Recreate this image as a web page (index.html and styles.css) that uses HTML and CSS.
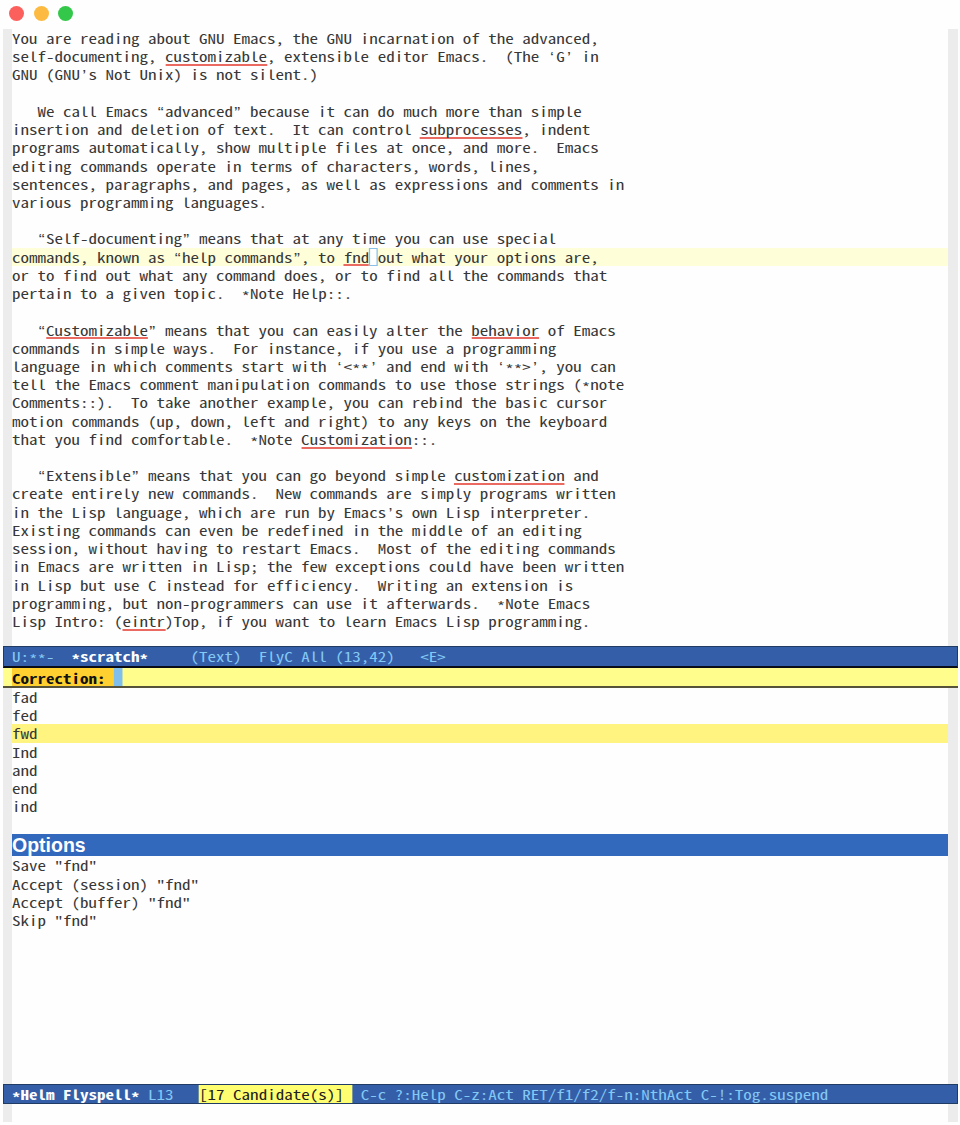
FILE: index.html
```html
<!DOCTYPE html>
<html lang="en">
<head>
<meta charset="utf-8">
<title>*scratch*</title>
<link rel="stylesheet" href="styles.css">
</head>
<body>
<div class="titlebar"><span class="dot red"></span><span class="dot amber"></span><span class="dot green"></span></div>
<main class="frame">
<section class="buffer text">
<div class="line">You are reading about GNU Emacs, the GNU incarnation of the advanced,</div>
<div class="line">self-documenting, <u>customizable</u>, extensible editor Emacs.  (The <q>‘</q>G<q>’</q> in</div>
<div class="line">GNU (GNU<q>’</q>s Not Unix) is not silent.)</div>
<div class="line"></div>
<div class="line">   We call Emacs <q>“</q>advanced<q>”</q> because it can do much more than simple</div>
<div class="line">insertion and deletion of text.  It can control <u>subprocesses</u>, indent</div>
<div class="line">programs automatically, show multiple files at once, and more.  Emacs</div>
<div class="line">editing commands operate in terms of characters, words, lines,</div>
<div class="line">sentences, paragraphs, and pages, as well as expressions and comments in</div>
<div class="line">various programming languages.</div>
<div class="line"></div>
<div class="line">   <q>“</q>Self-documenting<q>”</q> means that at any time you can use special</div>
<div class="line current">commands, known as <q>“</q>help commands<q>”</q>, to <u>fnd</u><span class="point"> </span>out what your options are,</div>
<div class="line">or to find out what any command does, or to find all the commands that</div>
<div class="line">pertain to a given topic.  <i>*</i>Note Help::.</div>
<div class="line"></div>
<div class="line">   <q>“</q><u>Customizable</u><q>”</q> means that you can easily alter the <u>behavior</u> of Emacs</div>
<div class="line">commands in simple ways.  For instance, if you use a programming</div>
<div class="line">language in which comments start with <q>‘</q>&lt;<i>**</i><q>’</q> and end with <q>‘</q><i>**</i>&gt;<q>’</q>, you can</div>
<div class="line">tell the Emacs comment manipulation commands to use those strings (<i>*</i>note</div>
<div class="line">Comments::).  To take another example, you can rebind the basic cursor</div>
<div class="line">motion commands (up, down, left and right) to any keys on the keyboard</div>
<div class="line">that you find comfortable.  <i>*</i>Note <u>Customization</u>::.</div>
<div class="line"></div>
<div class="line">   <q>“</q>Extensible<q>”</q> means that you can go beyond simple <u>customization</u> and</div>
<div class="line">create entirely new commands.  New commands are simply programs written</div>
<div class="line">in the Lisp language, which are run by Emacs<q>’</q>s own Lisp interpreter.</div>
<div class="line">Existing commands can even be redefined in the middle of an editing</div>
<div class="line">session, without having to restart Emacs.  Most of the editing commands</div>
<div class="line">in Emacs are written in Lisp; the few exceptions could have been written</div>
<div class="line">in Lisp but use C instead for efficiency.  Writing an extension is</div>
<div class="line">programming, but non-programmers can use it afterwards.  <i>*</i>Note Emacs</div>
<div class="line">Lisp Intro: (<u>eintr</u>)Top, if you want to learn Emacs Lisp programming.</div>
</section>
<div class="modeline top"><div class="line">U:<i>**</i>-  <b><i>*</i>scratch<i>*</i></b>     (Text)  FlyC All (13,42)   &lt;E&gt;</div></div>
<div class="prompt"><div class="line"><b>Correction: </b><span class="caret"> </span></div></div>
<section class="buffer helm">
<div class="line">fad</div>
<div class="line">fed</div>
<div class="line selected">fwd</div>
<div class="line">Ind</div>
<div class="line">and</div>
<div class="line">end</div>
<div class="line">ind</div>
<div class="line"></div>
<h2 class="source">Options</h2>
<div class="line">Save "fnd"</div>
<div class="line">Accept (session) "fnd"</div>
<div class="line">Accept (buffer) "fnd"</div>
<div class="line">Skip "fnd"</div>
</section>
<div class="modeline bottom"><div class="line"><b><i>*</i>Helm Flyspell<i>*</i></b> L13   <span class="count">[17 Candidate(s)] </span> C-c ?:Help C-z:Act RET/f1/f2/f-n:NthAct C-!:Tog.suspend</div></div>
<div class="echo"></div>
</main>
</body>
</html>
```
FILE: styles.css
```css
* { box-sizing: border-box; }
body {
  margin: 0;
  width: 960px;
  height: 1125px;
  background: #fefefe;
  color: #383838;
  font: 13.4px/18.22px "Noto Sans Mono CJK SC", "Noto Sans Mono CJK JP", "DejaVu Sans Mono", monospace;
  font-variant-ligatures: none;
  overflow: hidden;
}
.titlebar { display: flex; gap: 9.3px; height: 29px; padding: 6px 0 0 9.4px; }
.dot { width: 15px; height: 15px; border-radius: 50%; }
.red { background: #fc605c; }
.amber { background: #fcbb40; }
.green { background: #34c84a; }
.frame { display: flex; flex-direction: column; width: 955px; margin-left: 3px; }
.buffer { border: solid #ececec; border-width: 0 10px 0 9px; }
.text { height: 617px; }

/* Wide monospace cells: 0.5em glyphs stretched to 8.51px columns */
.line { height: 18.22px; width: calc(100% / 1.27); white-space: pre; transform: scaleX(1.27); transform-origin: 0 0; }
.current { background: #feffd9; }
u { display: inline-block; height: 18.7px; margin-bottom: -0.48px; text-decoration: none; border-bottom: 2px solid #ea6a62; vertical-align: top; }
q { display: inline-flex; justify-content: center; width: 6.7px; height: 18.22px; padding-top: 1px; vertical-align: top; font-family: "Liberation Sans", sans-serif; font-size: 14px; }
q::before, q::after { content: none; }
i { font-style: normal; line-height: 0; vertical-align: -2.5px; }
.point { display: inline-block; width: 6.7px; height: 18px; vertical-align: top; background: #fff; border: 1px solid #88c0ea; }
.modeline { background: #345fa8; color: #84c8f5; border: 1px solid #203c65; padding-left: 8px; }
.modeline b { color: #fff; }
.top { height: 22px; padding-top: 0.3px; border-bottom: 2px solid #080d18; }
.prompt { height: 20px; padding-left: 9px; background: #fffd8b; border-bottom: 2px solid #56533a; color: #111; }
.prompt b { display: inline-block; height: 18px; line-height: 20px; vertical-align: top; background: #ffd02f; }
.caret { display: inline-block; width: 6.7px; height: 18px; vertical-align: top; background: #80bfeb; }
.helm { height: 396px; }
.selected { background: #fff47f; }
.source { height: 22.6px; margin: 0; background: #3369bd; color: #fff; font: bold 19.5px/23px "Liberation Sans", Arial, sans-serif; }
.bottom { height: 20px; }
.count { display: inline-block; height: 18px; vertical-align: top; background: #fffd70; color: #222; }
.echo { height: 18px; border: solid #ececec; border-width: 0 10px 0 9px; }
```
